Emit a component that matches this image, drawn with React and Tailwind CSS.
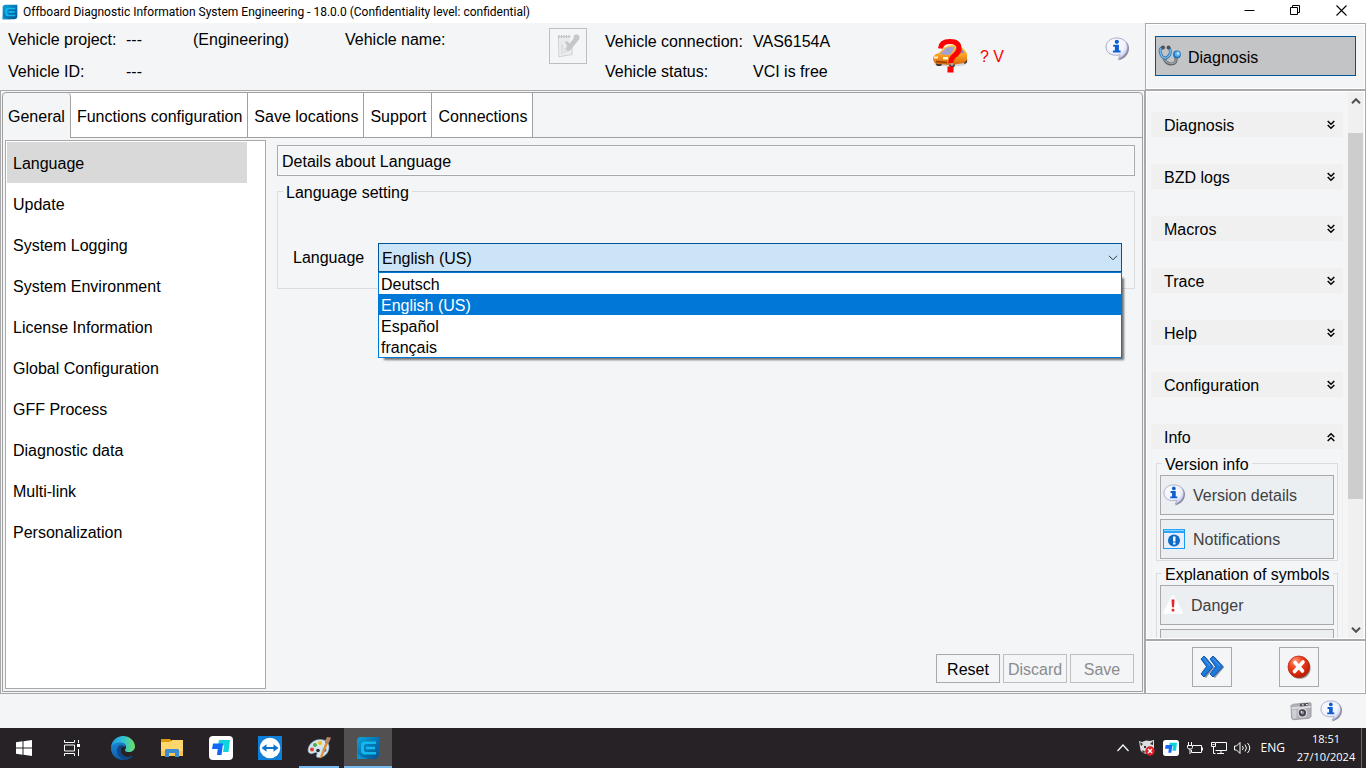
import { useState } from "react";

function AppLogo({ className }) {
  return (
    <svg viewBox="0 0 24 24" className={className} aria-hidden="true">
      <defs>
        <linearGradient id="logoBg" x1="0" y1="0" x2="1" y2="1">
          <stop offset="0" stopColor="#0ba6dc" />
          <stop offset="0.450" stopColor="#0579b8" />
          <stop offset="1" stopColor="#04538c" />
        </linearGradient>
      </defs>
      <path d="M5 1h18v17q0 5-5 5H1V5q0-4 4-4z" fill="url(#logoBg)" />
      <path d="M1 17q4 5 13 6H1z" fill="#0a94cf" />
      <path d="M20 5.500H9Q5 5.500 5 9.500v5q0 4 4 4h11V16H10q-2 0-2-2v-4q0-2 2-2h10z" fill="#13b8ee" />
      <path d="M10 10.700h9v2.600h-9z" fill="#13b8ee" />
    </svg>
  );
}

function InfoBubble({ className }) {
  return (
    <svg viewBox="0 0 24 24" className={className} aria-hidden="true">
      <defs>
        <radialGradient id="bubble" cx="0.4" cy="0.3" r="0.75">
          <stop offset="0" stopColor="#ffffff" />
          <stop offset="0.65" stopColor="#eef0fd" />
          <stop offset="1" stopColor="#b9bce6" />
        </radialGradient>
      </defs>
      <path d="M12.500 2C19 2 24 5.500 24 11c0 6-4 11-11 12.500 1.500-1.500 2.500-3 2.300-4.600" fill="#8a8a9c" />
      <path
        d="M11.800 1C18 1 22.500 4.500 22.500 10c0 5-3 9.500-9.500 12 1.300-1.700 2-3 1.800-4.200C7 19.500 1 16 1 10 1 4.500 5.500 1 11.800 1z"
        fill="url(#bubble)"
        stroke="#a3a5c4"
        strokeWidth="0.900"
      />
      <circle cx="11.800" cy="4.800" r="2.100" fill="#0f5fd0" />
      <path d="M8.200 7.700h5.700v5.800h1.700v2H7.900v-2h2V9.700H8.200z" fill="#0f5fd0" />
    </svg>
  );
}

function NotepadIcon({ className }) {
  return (
    <svg viewBox="0 0 24 24" className={className} aria-hidden="true">
      <path d="M2.500 2.500h12M2.500 2l.5 20.500 13-2V13" fill="none" stroke="#d0d1d3" strokeWidth="1.200" />
      <path d="M3 3h11v5l-4 6v3l4-1.500 1-1V20L3.500 21.500z" fill="#eaebed" />
      <path d="M3 1v3M5.500 1v3M8 1v3M10.500 1v3M13 1v3" stroke="#c0c1c3" strokeWidth="1.200" />
      <path d="M6 10v10M9 14v5" stroke="#d5d6d8" strokeWidth="1.200" />
      <path d="M8.500 7.500h3l2 2L19 3l4 2.500L14.500 16 11 17.500l-1-3 1-3z" fill="#c6c7c9" />
      <circle cx="20.500" cy="3.500" r="3" fill="#c6c7c9" />
    </svg>
  );
}

function CarQuestion({ className }) {
  return (
    <svg viewBox="0 0 36 36" className={className} aria-hidden="true">
      <defs>
        <linearGradient id="carBody" x1="0" y1="0" x2="0" y2="1">
          <stop offset="0" stopColor="#ffd24a" />
          <stop offset="0.5" stopColor="#fba223" />
          <stop offset="1" stopColor="#d6620c" />
        </linearGradient>
      </defs>
      <ellipse cx="18" cy="26" rx="16" ry="2.500" fill="#00000022" />
      <rect x="4" y="23" width="6" height="5" rx="2" fill="#38322e" />
      <ellipse cx="20" cy="26" rx="3" ry="3.500" fill="#38322e" />
      <ellipse cx="33" cy="22" rx="2.200" ry="3.800" fill="#38322e" />
      <path d="M1 20q1-4 6-5l6-6q8-4 15-1 5 3 7 8v6l-3 3-13 2-14-1q-4-1-4-6z" fill="url(#carBody)" />
      <path d="M8 16l6-6q5-2 9-1l-5 8q-6 0-10-1z" fill="#a5a0d4" />
      <path d="M21 16l4-7q5 0 7 6z" fill="#8681b9" />
      <rect x="2" y="18.500" width="4" height="2" fill="#fff3d0" />
      <rect x="11" y="19" width="5" height="2.500" fill="#fff3d0" />
      <path d="M4 23.500l11 1" stroke="#963c05" strokeWidth="1.500" />
      <ellipse cx="20" cy="26" rx="1.500" ry="2" fill="#aaa" />
      <path
        d="M8.500 10.500Q9 3.500 18 3.500q9 0 9 7 0 4-4.500 7-3.500 2.500-3.500 7.500"
        fill="none"
        stroke="#ff0000"
        strokeWidth="5"
      />
      <rect x="15.500" y="28.500" width="6" height="6" fill="#ff0000" />
    </svg>
  );
}

function Stethoscope({ className }) {
  return (
    <svg viewBox="0 0 24 24" className={className} aria-hidden="true">
      <path d="M6 14q2 6 7.500 6T18 13" fill="none" stroke="#606468" strokeWidth="3.200" />
      <path d="M6 14q2 5.500 7.500 5.500T18 13" fill="none" stroke="#9ba1a6" strokeWidth="1.400" />
      <path d="M4.500 4Q1 4 2.500 9q1.500 5 4.500 5t5-4q1-5-1.500-6" fill="none" stroke="#2b6ea8" strokeWidth="2.800" />
      <path d="M4.500 4Q1 4 2.500 9q1.500 5 4.500 5t5-4q1-5-1.500-6" fill="none" stroke="#78bbee" strokeWidth="1.400" />
      <circle cx="5" cy="3.500" r="2" fill="#505356" />
      <circle cx="10.500" cy="3.500" r="2" fill="#505356" />
      <circle cx="19" cy="10.500" r="3.900" fill="#2272ba" />
      <circle cx="19.500" cy="10" r="2.700" fill="#5ab3f4" />
      <circle cx="20" cy="9.500" r="1.200" fill="#c9e8ff" />
    </svg>
  );
}

function NotificationIcon({ className }) {
  return (
    <svg viewBox="0 0 22 22" className={className} aria-hidden="true">
      <rect x="0.500" y="1.500" width="21" height="19" fill="#e9effa" stroke="#1b98f0" />
      <rect x="1" y="1" width="20" height="4" fill="#2aa5f7" />
      <path d="M1 2.500h20" stroke="#8bd2ff" />
      <circle cx="11" cy="12.500" r="6" fill="#0e6cc8" />
      <path d="M10 8.500h2.500v5H10zM10 14.500h2.500v2H10z" fill="#fff" />
    </svg>
  );
}

function DangerIcon({ className }) {
  return (
    <svg viewBox="0 0 22 22" className={className} aria-hidden="true">
      <path d="M11 0.500q1 0 1.800 1.400l9 16.700q.7 1.900-1.200 1.900H1.400Q-.5 20.500.2 18.600L9.200 1.900Q10 .5 11 .5z" fill="#fff" />
      <path d="M9.300 5h3.400l-.6 8.500h-2.200z" fill="#e8262d" />
      <rect x="9.500" y="15.200" width="3" height="3" rx="1" fill="#e8262d" />
    </svg>
  );
}

function ForwardIcon({ className }) {
  return (
    <svg viewBox="0 0 24 24" className={className} aria-hidden="true">
      <g transform="translate(1 1)" fill="#8a94a2">
        <path d="M1 4l4-3 8 10.500L5 22l-4-3 5-7.500z" />
        <path d="M10 4l4-3 9 10.500L14 22l-4-3 5-7.500z" />
      </g>
      <g fill="#1d7be0" stroke="#0b4a98" strokeWidth="0.900" strokeLinejoin="round">
        <path d="M1 4l3-3 9 10.500L4 22l-3-3 5.500-7.500z" />
        <path d="M10 4l3-3 10 10.500L13 22l-3-3 5.500-7.500z" />
      </g>
      <path d="M3.500 3l6.500 8M12.500 3l7.500 8" stroke="#4f9ff0" strokeWidth="1" />
    </svg>
  );
}

function CancelIcon({ className }) {
  return (
    <svg viewBox="0 0 24 24" className={className} aria-hidden="true">
      <defs>
        <radialGradient id="cancelRed" cx="0.350" cy="0.250" r="0.800">
          <stop offset="0" stopColor="#ff9c80" />
          <stop offset="0.400" stopColor="#f4421e" />
          <stop offset="1" stopColor="#b81800" />
        </radialGradient>
      </defs>
      <circle cx="12.800" cy="13" r="10.800" fill="#99908e" />
      <circle cx="11.800" cy="11.800" r="10.800" fill="url(#cancelRed)" stroke="#a92510" strokeWidth="0.700" />
      <path d="M8 7.500l7.500 8.500M16 7l-8.500 9.500" stroke="#fff" strokeWidth="3.600" strokeLinecap="round" />
    </svg>
  );
}

function CameraIcon({ className }) {
  return (
    <svg viewBox="0 0 24 20" className={className} aria-hidden="true">
      <path d="M1 4l3-1.500L22 1q1 0 1 1.500V16l-2 2-17 1.500q-2 0-2.300-2z" fill="#b3b1b8" stroke="#85838a" strokeWidth="0.700" />
      <path d="M1.500 6L22.500 4.500v2L1.700 8z" fill="#dddce2" />
      <path d="M2 9l5-.4V18l-4 .5z" fill="#cfced5" />
      <path d="M11 2.200l9-.8v3l-9 .7z" fill="#4c4b50" />
      <path d="M13 2.500h2v1.500h-2zM17.500 2.300h2v1.500h-2z" fill="#eee" />
      <circle cx="13.500" cy="12" r="5.300" fill="#e1e0e5" />
      <circle cx="13.500" cy="12" r="4" fill="#424147" />
      <circle cx="13.500" cy="12" r="2" fill="#858aa5" />
      <circle cx="12.500" cy="11" r="0.900" fill="#fff" />
    </svg>
  );
}

function EdgeIcon() {
  return (
    <svg viewBox="0 0 24 24" className="h-6 w-6" aria-hidden="true">
      <defs>
        <linearGradient id="edgeTop" x1="0" y1="0.500" x2="1" y2="0.500">
          <stop offset="0" stopColor="#2097dd" />
          <stop offset="0.500" stopColor="#31c1d8" />
          <stop offset="1" stopColor="#6be061" />
        </linearGradient>
        <linearGradient id="edgeBottom" x1="0" y1="0" x2="0.500" y2="1">
          <stop offset="0" stopColor="#1a8ad5" />
          <stop offset="1" stopColor="#0d57a4" />
        </linearGradient>
      </defs>
      <path d="M0 12C0 5 5.500 0 12 0s12 5 12 10.500c0 3.500-3 5.500-6 5.500-4 0-4.500-1.700-3.500-3 1.500-2.500.2-6-4.500-6-5 0-9 2.500-10 5z" fill="url(#edgeTop)" />
      <path d="M0 12.500C.5 9 4 6.500 8.500 6.500c4 0 6.500 2 6.500 4.500-2-1.500-5-.5-5.500 2.500-.5 4.500 3.500 8 8.500 7.500 1.500 0 3-.6 4-1.200C20 22.500 16 24 12 24 5 24 0 18.500 0 12.500z" fill="url(#edgeBottom)" />
      <path d="M8 9.500c-4 4-2 11 5 14.500 4 0 7-1.500 9-4.200-6 2.700-12 .2-12.500-5.300 0-2 1-4 3-5-1.500-.5-3-.5-4.500 0z" fill="#124787" />
    </svg>
  );
}

function FolderIcon() {
  return (
    <svg viewBox="0 0 22 20" className="h-5 w-[22px]" aria-hidden="true">
      <path d="M0 1h9l1 1v3H0z" fill="#dd9b0c" />
      <path d="M0 4h9l2-2h11v16H0z" fill="#ffd66b" />
      <path d="M0 13h22v5H0z" fill="#f8c64d" />
      <path d="M4 12l1-1h12l1 1v7h-4v-4H8v4H4z" fill="#3a8dd4" />
    </svg>
  );
}

function BirdTile({ className }) {
  return (
    <svg viewBox="0 0 24 24" className={className} aria-hidden="true">
      <rect width="24" height="24" rx="4" fill="#fff" />
      <path d="M10 4h11l-1.500 12H14l1-6.500H9z" fill="#10d3dc" />
      <path d="M4 7.500h10L12.500 19H8l.7-6H3z" fill="#1268fa" />
    </svg>
  );
}

function RemoteIcon() {
  return (
    <svg viewBox="0 0 24 24" className="h-6 w-6" aria-hidden="true">
      <rect width="24" height="24" fill="#0d7ed9" />
      <circle cx="12" cy="12" r="10.300" fill="#fff" />
      <path d="M3.500 12l5-3.700V11h7V8.300l5 3.700-5 3.700V13h-7v2.700z" fill="#0d72ca" />
    </svg>
  );
}

function PaintIcon() {
  return (
    <svg viewBox="0 0 24 24" className="h-6 w-6" aria-hidden="true">
      <path d="M13 3.500C19 3.500 22.500 7 22 12c-.5 5.500-5 9.500-10.500 9.500-2.500 0-2.500-2-1.500-3.500.5-1.500-1-2-3-1-3 1.500-6 .5-6-3C1.500 8 7 3.500 13 3.500z" fill="#d3e5ef" stroke="#88a9bb" strokeWidth="0.600" />
      <circle cx="5" cy="13.500" r="2" fill="#e43c2f" />
      <circle cx="8" cy="9" r="2" fill="#45af4b" />
      <circle cx="13" cy="7" r="2" fill="#f5ba15" />
      <circle cx="11" cy="14.500" r="1.800" fill="#262f38" />
      <circle cx="17.500" cy="14" r="2" fill="#307fd0" />
      <path d="M12.500 22.500l6-16 2.500 1-6 14z" fill="#e58e30" />
      <path d="M18 5l2-4 4 .5L22.500 5.500 21 8l-3-1z" fill="#b58463" />
    </svg>
  );
}

function WindowsIcon() {
  return (
    <svg viewBox="0 0 16 16" className="h-4 w-4" fill="#fff" aria-hidden="true">
      <path d="M0 2.200L6.500 1.300v6.200H0zM7.500 1.200L16 0v7.500H7.500zM0 8.500h6.500v6.200L0 13.800zM7.500 8.500H16V16l-8.500-1.200z" />
    </svg>
  );
}

function TaskViewIcon() {
  return (
    <svg viewBox="0 0 16 16" className="h-4 w-4" fill="none" stroke="#fff" aria-hidden="true">
      <path d="M0.500 0v2.500h10V0M0.500 5h10v6H0.500zM0.500 16v-2.500h10V16M14.500 0v3M14.500 9v7" />
      <path d="M13 4h3v3h-3z" fill="#fff" stroke="none" />
    </svg>
  );
}

function DoubleChevron({ up }) {
  return (
    <svg
      viewBox="0 0 8 10"
      className={up ? "h-[10px] w-2 rotate-180" : "h-[10px] w-2"}
      fill="none"
      stroke="#000"
      strokeWidth="1.500"
      aria-hidden="true"
    >
      <path d="M0.700 1L4 4.200 7.300 1M0.700 5L4 8.200 7.300 5" />
    </svg>
  );
}

function Chevron({ className }) {
  return (
    <svg viewBox="0 0 10 6" className={className} fill="none" stroke="currentColor" aria-hidden="true">
      <path d="M1 0.800L5 4.800 9 0.800" />
    </svg>
  );
}

const TABS = ["General", "Functions configuration", "Save locations", "Support", "Connections"];
const SECTIONS = [
  "Language",
  "Update",
  "System Logging",
  "System Environment",
  "License Information",
  "Global Configuration",
  "GFF Process",
  "Diagnostic data",
  "Multi-link",
  "Personalization",
];
const LANGUAGES = ["Deutsch", "English (US)", "Español", "français"];
const GROUPS = ["Diagnosis", "BZD logs", "Macros", "Trace", "Help", "Configuration"];

function TitleBar() {
  return (
    <header className="flex h-[23px] shrink-0 items-center bg-white pl-[2px]">
      <AppLogo className="h-4 w-4" />
      <h1 className="ml-[5px] flex-1 font-[Roboto,sans-serif] text-[12px] leading-[16px]">
        Offboard Diagnostic Information System Engineering - 18.0.0 (Confidentiality level: confidential)
      </h1>
      <div className="flex h-full pr-[2px] pb-[2px]">
        <button aria-label="Minimize" className="flex w-[46px] items-center justify-center">
          <svg viewBox="0 0 11 11" className="h-[11px] w-[11px]" stroke="#000">
            <path d="M0.500 5.500h10" />
          </svg>
        </button>
        <button aria-label="Restore" className="flex w-[46px] items-center justify-center">
          <svg viewBox="0 0 11 11" className="h-[11px] w-[11px]" fill="none" stroke="#000">
            <path d="M0.500 2.500h7v7h-7zM2.500 2.500v-2h7v7h-2" />
          </svg>
        </button>
        <button aria-label="Close" className="flex w-[46px] items-center justify-center">
          <svg viewBox="0 0 11 11" className="h-[11px] w-[11px]" stroke="#000" strokeWidth="1.100">
            <path d="M0.500 0.500l10 10M10.500 0.500l-10 10" />
          </svg>
        </button>
      </div>
    </header>
  );
}

function VehicleHeader() {
  return (
    <div className="flex h-[67px] shrink-0 pl-2">
      <div className="grid w-[541px] grid-cols-[118px_67px_152px_1fr] grid-rows-[32px_32px] items-center pt-px">
        <span>Vehicle project:</span>
        <span>---</span>
        <span>(Engineering)</span>
        <span>Vehicle name:</span>
        <span>Vehicle ID:</span>
        <span>---</span>
      </div>
      <button
        aria-label="Edit notes"
        disabled
        className="mt-[5px] flex h-9 w-[38px] items-center justify-center border border-[#bfbfc1]"
      >
        <NotepadIcon className="h-6 w-6" />
      </button>
      <div className="ml-[18px] grid grid-cols-[148px_auto] grid-rows-[30px_30px] content-start items-center pt-1">
        <span>Vehicle connection:</span>
        <span>VAS6154A</span>
        <span>Vehicle status:</span>
        <span>VCI is free</span>
      </div>
      <div className="mr-4 ml-auto flex items-start pt-[14px]">
        <CarQuestion className="mt-px h-9 w-9" />
        <span className="mt-[10px] ml-3 text-[#ff0000]">? V</span>
        <button aria-label="Information" className="ml-[101px]">
          <InfoBubble className="h-6 w-6" />
        </button>
      </div>
    </div>
  );
}

function LanguagePicker({ language, onChange }) {
  return (
    <div className="relative flex-1">
      <select
        id="language"
        value={language}
        onChange={(e) => onChange(e.target.value)}
        className="block h-[29px] w-full appearance-none border border-[#005499] bg-[#cce4f7] pt-[2px] pl-[3px] outline-none"
      >
        {LANGUAGES.map((name) => (
          <option key={name}>{name}</option>
        ))}
      </select>
      <Chevron className="pointer-events-none absolute top-3 right-1 h-[6px] w-[10px] text-[#333]" />
      <ul
        role="listbox"
        aria-label="Language options"
        className="absolute top-full left-0 w-full border border-[#0078d7] bg-white shadow-[4px_4px_2px_-2px_#00000088]"
      >
        {LANGUAGES.map((name) => (
          <li
            key={name}
            role="option"
            aria-selected={name === language}
            onClick={() => onChange(name)}
            className={
              name === language
                ? "h-[21px] bg-[#0078d7] pl-[2px] leading-[24px] text-white"
                : "h-[21px] pl-[2px] leading-[24px]"
            }
          >
            {name}
          </li>
        ))}
      </ul>
    </div>
  );
}

function SettingsPanel() {
  const [language, setLanguage] = useState("English (US)");
  return (
    <main className="flex min-h-0 flex-1 flex-col border border-[#a9a9ac] p-px">
      <div className="flex min-h-0 flex-1 flex-col rounded-t-[4px] border border-[#a0a0a0]">
        <div role="tablist" className="flex h-[45px] shrink-0">
          {TABS.map((tab, i) => (
            <button
              key={tab}
              role="tab"
              aria-selected={i === 0}
              className={
                i === 0
                  ? "rounded-tr-[4px] border-r border-[#a0a0a0] pt-[3px] pr-[5px] pl-[5px]"
                  : "border-r border-b border-[#a0a0a0] bg-white pt-1 pr-[5px] pl-[6px]"
              }
            >
              {tab}
            </button>
          ))}
          <div className="flex-1 border-b border-[#a0a0a0]" />
        </div>
        <div className="flex min-h-0 flex-1">
          <nav className="m-[2px] w-[261px] shrink-0 border border-[#a9a9ac] bg-white p-px">
            {SECTIONS.map((name, i) => (
              <a
                key={name}
                href={"#" + name.toLowerCase().replace(/ /g, "-")}
                className={
                  i === 0
                    ? "mr-[17px] block h-[41px] bg-[#d9d9d9] pl-[6px] leading-[43px]"
                    : "block h-[41px] pl-[6px] leading-[43px]"
                }
              >
                {name}
              </a>
            ))}
          </nav>
          <section className="flex flex-1 flex-col pt-[7px] pr-[7px] pb-2 pl-[9px]">
            <h2 className="h-[31px] shrink-0 border border-[#a9a9ac] pl-1 leading-[31px] shadow-[inset_0_0_0_1px_#fafbfc]">
              Details about Language
            </h2>
            <fieldset className="mt-[3px] border border-[#dcdcdf] pr-3 pb-4 pl-[15px]">
              <legend className="-ml-[10px] px-[3px] pt-1 leading-[20px]">Language setting</legend>
              <div className="flex items-center pt-10">
                <label htmlFor="language" className="w-[85px]">
                  Language
                </label>
                <LanguagePicker language={language} onChange={setLanguage} />
              </div>
            </fieldset>
            <div className="mt-auto flex justify-end gap-[3px] pr-px">
              <button className="h-[29px] w-16 border border-[#a9a9ac] pt-[3px]">Reset</button>
              <button disabled className="h-[29px] w-16 border border-[#bfbfc1] pt-[3px] text-[#8b8b8d]">
                Discard
              </button>
              <button disabled className="h-[29px] w-16 border border-[#bfbfc1] pt-[3px] text-[#8b8b8d]">
                Save
              </button>
            </div>
          </section>
        </div>
      </div>
    </main>
  );
}

function GroupHeader({ name, open }) {
  return (
    <button
      aria-expanded={!!open}
      className="flex h-[25px] w-full shrink-0 items-center justify-between bg-[#f0f0f0] pr-2 pl-[13px]"
    >
      <span className="pt-[2px]">{name}</span>
      <DoubleChevron up={open} />
    </button>
  );
}

function SideButton({ icon, children }) {
  return (
    <button className="flex h-10 w-full items-center gap-2 border border-[#a9a9ac] bg-[#eceff2] pl-[2px] text-[#404142]">
      {icon}
      <span className="pt-px">{children}</span>
    </button>
  );
}

function Sidebar() {
  return (
    <aside className="flex min-h-0 flex-col">
      <div className="h-[67px] shrink-0 border border-[#a9a9ac] px-[9px] pt-3 shadow-[inset_0_0_0_1px_#ffffff]">
        <button className="flex h-10 w-full items-center border border-[#005499] bg-[#c3c4c6] pl-[2px]">
          <Stethoscope className="h-6 w-6" />
          <span className="ml-[6px] pt-1">Diagnosis</span>
        </button>
      </div>
      <div className="flex min-h-0 flex-1 border border-[#a9a9ac] py-px pr-[2px] pl-px shadow-[inset_0_0_0_1px_#ffffff]">
        <div className="flex min-w-0 flex-1 flex-col overflow-hidden pt-5 pr-[5px] pl-1">
          <div className="flex shrink-0 flex-col gap-[27px]">
            {GROUPS.map((name) => (
              <GroupHeader key={name} name={name} />
            ))}
            <GroupHeader name="Info" open />
          </div>
          <div className="shrink-0 border-x border-[#f0f0f0] px-1 pt-[2px]">
            <fieldset className="border border-[#dcdcdf] px-[3px] pb-px">
              <legend className="ml-[2px] px-[3px] pt-1 leading-[20px]">Version info</legend>
              <div className="flex flex-col gap-1">
                <SideButton icon={<InfoBubble className="h-[22px] w-[22px]" />}>Version details</SideButton>
                <SideButton icon={<NotificationIcon className="h-[22px] w-[22px]" />}>Notifications</SideButton>
              </div>
            </fieldset>
            <fieldset className="border border-[#dcdcdf] px-[3px] pb-px">
              <legend className="ml-[2px] px-[3px] pt-1 leading-[20px]">Explanation of symbols</legend>
              <div className="flex flex-col gap-1">
                <SideButton icon={<DangerIcon className="h-5 w-5" />}>Danger</SideButton>
                <SideButton />
              </div>
            </fieldset>
          </div>
        </div>
        <div className="flex w-[15px] shrink-0 flex-col bg-[#f0f0f0] text-[#505050]">
          <div className="flex h-[17px] items-center justify-center">
            <Chevron className="h-[6px] w-[10px] rotate-180 stroke-2" />
          </div>
          <div className="flex flex-1 flex-col pt-6">
            <div className="h-3/4 bg-[#cdcdcd]" />
          </div>
          <div className="flex h-[17px] items-center justify-center">
            <Chevron className="h-[6px] w-[10px] stroke-2" />
          </div>
        </div>
      </div>
      <div className="flex h-[54px] shrink-0 justify-center gap-[47px] border border-[#a9a9ac] pt-[6px] shadow-[inset_0_0_0_1px_#ffffff]">
        <button aria-label="Continue" className="flex h-10 w-10 items-center justify-center border border-[#a9a9ac]">
          <ForwardIcon className="h-6 w-6" />
        </button>
        <button aria-label="Cancel" className="flex h-10 w-10 items-center justify-center border border-[#a9a9ac]">
          <CancelIcon className="h-6 w-6" />
        </button>
      </div>
    </aside>
  );
}

function TaskButton({ label, active, running, children }) {
  return (
    <button
      aria-label={label}
      className={
        active
          ? "flex h-10 w-12 items-center justify-center border-b-2 border-[#76b9ed] bg-[#535052] pt-[2px]"
          : "flex h-10 w-12 flex-col items-center justify-center"
      }
    >
      {running ? (
        <span className="flex h-10 w-10 items-center justify-center border-b-2 border-[#76b9ed] pt-[2px]">
          {children}
        </span>
      ) : (
        children
      )}
    </button>
  );
}

function Taskbar() {
  return (
    <footer className="flex h-10 shrink-0 bg-[#262225] font-['Open_Sans',sans-serif] text-white">
      <TaskButton label="Start">
        <WindowsIcon />
      </TaskButton>
      <TaskButton label="Task View">
        <TaskViewIcon />
      </TaskButton>
      <div className="ml-[3px] flex gap-px">
        <TaskButton label="Edge">
          <EdgeIcon />
        </TaskButton>
        <TaskButton label="File Explorer">
          <FolderIcon />
        </TaskButton>
        <TaskButton label="ToDesk">
          <BirdTile className="h-6 w-6" />
        </TaskButton>
        <TaskButton label="TeamViewer">
          <RemoteIcon />
        </TaskButton>
        <TaskButton label="Paint" running>
          <PaintIcon />
        </TaskButton>
        <TaskButton label="Diagnostic system" active>
          <AppLogo className="h-6 w-6" />
        </TaskButton>
      </div>
      <div className="ml-auto flex items-center">
        <button aria-label="Show hidden icons" className="flex w-6 justify-center">
          <svg viewBox="0 0 12 8" className="h-2 w-3" fill="none" stroke="#fff" strokeWidth="1.200">
            <path d="M0.500 7L6 1l5.500 6" />
          </svg>
        </button>
        <span className="flex w-6 justify-center">
          <svg viewBox="0 0 16 16" className="h-4 w-4" aria-hidden="true">
            <path d="M0 1l3 1 4-1.500L11 1l4-1v8q-2 6-7 6-7-1-7-7z" fill="#dedede" />
            <path d="M1 2l3 2-2 2zM14 1l-3 3 3 1zM5 6h2v2H5zM3 10l4 2-3 1z" fill="#333" />
            <circle cx="11" cy="11" r="4.700" fill="#dc1f26" />
            <path d="M9 9l4 4M13 9l-4 4" stroke="#fff" strokeWidth="1.400" />
          </svg>
        </span>
        <span className="flex w-6 justify-center">
          <BirdTile className="h-4 w-4" />
        </span>
        <span className="flex w-6 justify-center">
          <svg viewBox="0 0 16 14" className="h-[14px] w-4" fill="none" stroke="#fff" aria-hidden="true">
            <path d="M6 4.500h8.500v7H4.500V9M15.500 6.500v3M1.500 1v3M4.500 1v3M0.500 4.500h5v2l-1 1.500h-3l-1-1.500zM3 8v5" />
          </svg>
        </span>
        <span className="flex w-6 justify-center">
          <svg viewBox="0 0 16 14" className="h-[14px] w-4" fill="none" stroke="#fff" aria-hidden="true">
            <path d="M5 1.500h10.500v8H4.500M10 9.500v3M6 12.500h7M0.500 1.500h4v4h-4zM2.500 5.500v7h2M1.500 3.500h2" />
          </svg>
        </span>
        <span className="flex w-6 justify-center">
          <svg viewBox="0 0 17 14" className="h-[14px] w-[17px]" fill="none" stroke="#fff" aria-hidden="true">
            <path d="M0.500 5v4h2l3.500 3.500v-11L2.500 5zM8.500 5q1.500 2 0 4M11 3.500q3 3.500 0 7M13.500 2q4.500 5 0 10" />
          </svg>
        </span>
        <span className="ml-[6px] text-[12px]">ENG</span>
        <time className="ml-[11px] w-[60px] text-center text-[11px] leading-[18px]">
          18:51
          <br />
          27/10/2024
        </time>
        <span className="mr-1 ml-[5px] h-full w-px bg-[#6b686a]" />
      </div>
    </footer>
  );
}

export default function App() {
  return (
    <div className="flex h-screen min-h-[640px] flex-col bg-[#f3f5f7] font-['Liberation_Sans',Arial,sans-serif] text-[16px] leading-[20px] text-black">
      <TitleBar />
      <div className="grid min-h-0 flex-1 grid-cols-[1fr_221px]">
        <div className="flex min-h-0 min-w-0 flex-col">
          <VehicleHeader />
          <SettingsPanel />
        </div>
        <Sidebar />
      </div>
      <div className="flex h-[34px] shrink-0 items-center justify-end gap-2 pr-6">
        <button aria-label="Screenshot">
          <CameraIcon className="h-5 w-[22px]" />
        </button>
        <button aria-label="Information">
          <InfoBubble className="h-[22px] w-[22px]" />
        </button>
      </div>
      <Taskbar />
    </div>
  );
}
